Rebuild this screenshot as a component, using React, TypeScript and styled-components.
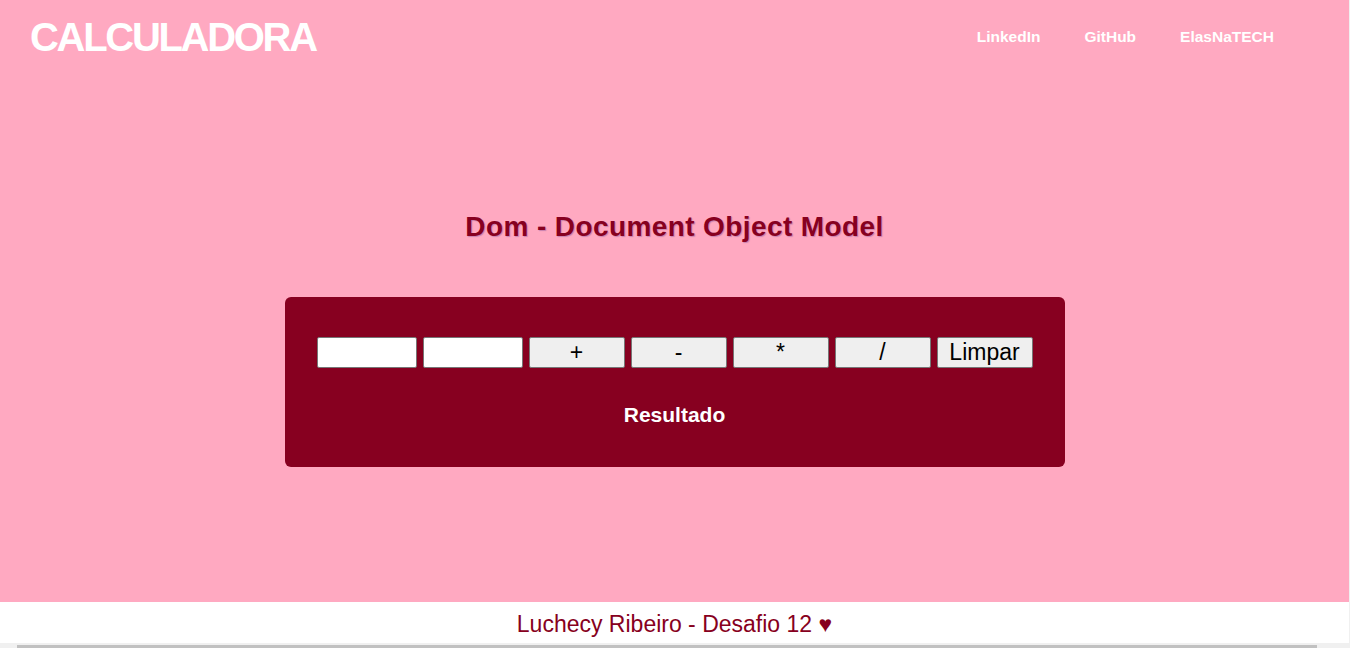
import React from "react";
import styled, { createGlobalStyle } from "styled-components";

const PINK = "#ffa9c1";
const WINE = "#870020";

const Global = createGlobalStyle`
  html, body { margin: 0; padding: 0; }
  body { font-family: "Liberation Sans", Arial, sans-serif; background: ${PINK}; overflow: hidden; }
  * { box-sizing: border-box; }
`;

const Page = styled.div`
  height: 648px;
  display: flex;
  flex-direction: column;
  background: ${PINK};
  border-right: 1px solid #f0f0f0;
`;

const Header = styled.header`
  height: 74px;
  display: flex;
  align-items: center;
  justify-content: space-between;
  padding: 0 75px 0 30px;
`;

const Brand = styled.h1`
  margin: 0;
  font-size: 40px;
  line-height: 42px;
  font-weight: 700;
  letter-spacing: -2.3px;
  color: #fff;
`;

const Nav = styled.nav`
  display: flex;
  gap: 44px;
`;

const NavLink = styled.a`
  color: #fff;
  font-size: 15.5px;
  line-height: 16px;
  font-weight: 700;
  text-decoration: none;
`;

const Main = styled.main`
  flex: 1;
  display: flex;
  flex-direction: column;
  align-items: center;
  padding-top: 137px;
`;

const Heading = styled.h2`
  margin: 0;
  font-size: 28px;
  line-height: 32px;
  font-weight: 700;
  color: ${WINE};
  letter-spacing: 0.4px;
  text-shadow: 1px 1px 1px rgba(70, 40, 140, 0.3);
`;

const Card = styled.section`
  margin-top: 54px;
  width: 780px;
  background: ${WINE};
  border-radius: 6px;
  padding: 40px 32px 40px;
  display: flex;
  flex-direction: column;
  align-items: center;
  gap: 35px;
`;

const Row = styled.div`
  display: flex;
  gap: 6px;
`;

const NumInput = styled.input`
  width: 100px;
  height: 31px;
  background: #fff;
  border: 1px solid #767676;
  border-radius: 2px;
  font-size: 16px;
  padding: 0 4px;
`;

const OpButton = styled.button`
  width: 96px;
  height: 31px;
  background: #efefef;
  border: 1px solid #767676;
  border-radius: 2px;
  color: #000;
  font-family: "Liberation Sans", Arial, sans-serif;
  font-size: 23px;
  line-height: 29px;
  padding: 0;
`;

const Result = styled.p`
  margin: 0;
  color: #fff;
  font-size: 21px;
  line-height: 24px;
  font-weight: 700;
`;

const Footer = styled.footer`
  height: 41px;
  background: #fff;
  color: ${WINE};
  font-size: 23px;
  line-height: 37px;
  padding-top: 4px;
  text-align: center;
`;

const ScrollTrack = styled.div`
  height: 5px;
  background: #f0f0f0;
  padding: 2px 32px 0 17px;
`;

const ScrollThumb = styled.div`
  height: 3px;
  background: #c1c1c1;
`;

export default function App() {
  return (
    <>
      <Global />
      <Page>
        <Header>
          <Brand>CALCULADORA</Brand>
          <Nav>
            <NavLink href="#">LinkedIn</NavLink>
            <NavLink href="#">GitHub</NavLink>
            <NavLink href="#">ElasNaTECH</NavLink>
          </Nav>
        </Header>
        <Main>
          <Heading>Dom - Document Object Model</Heading>
          <Card>
            <Row>
              <NumInput type="text" />
              <NumInput type="text" />
              <OpButton>+</OpButton>
              <OpButton>-</OpButton>
              <OpButton>*</OpButton>
              <OpButton>/</OpButton>
              <OpButton>Limpar</OpButton>
            </Row>
            <Result>Resultado</Result>
          </Card>
        </Main>
        <Footer>Luchecy Ribeiro - Desafio 12 ♥</Footer>
        <ScrollTrack>
          <ScrollThumb />
        </ScrollTrack>
      </Page>
    </>
  );
}
